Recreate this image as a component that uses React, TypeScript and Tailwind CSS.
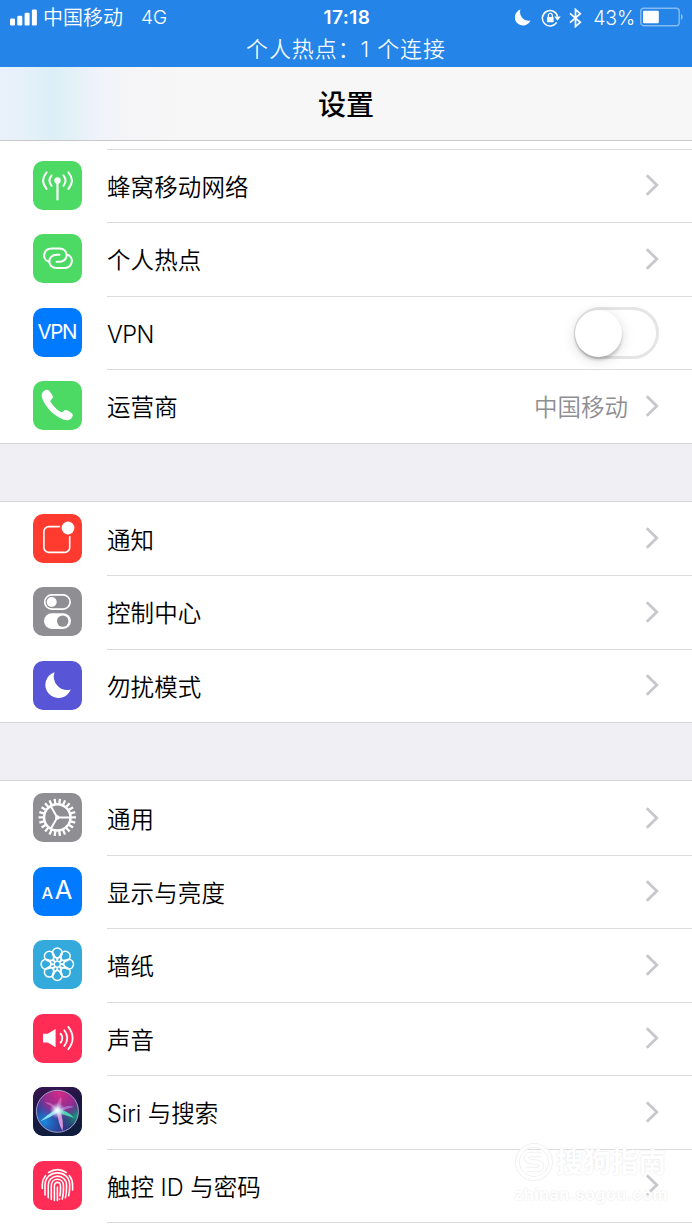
import type { ReactNode } from "react";

type Item = {
  id: string;
  label: string;
  color: string;
  icon: ReactNode;
  tracking?: string;
  value?: string;
  toggle?: boolean;
};

const around = (n: number) => Array.from({ length: n }, (_, i) => (360 / n) * i);

const CellularIcon = () => (
  <g fill="none" stroke="white" strokeWidth="2" strokeLinecap="round">
    <circle cx="24.5" cy="19.5" r="3.2" fill="white" stroke="none" />
    <path d="M24.5 20V38.5" strokeWidth="2.2" />
    <path d="M18.6 14.4Q14.4 19.5 18.6 24.8M30.4 14.4Q34.6 19.5 30.4 24.8" />
    <path d="M13.6 11.4Q6.6 19.5 13.6 28M35.4 11.4Q42.4 19.5 35.4 28" />
  </g>
);

const HotspotIcon = () => (
  <g fill="none" stroke="white" strokeWidth="2" strokeLinecap="round">
    <path d="M15.6 27.6C8.6 25.4 10 14.6 19 14.6H26.5C36 14.6 36 27.8 26.5 27.8H23.5" />
    <path d="M34.4 20.8C41.4 23 40 34 31 34H23.5C14 34 14 20.8 23.5 20.8H26.5" />
  </g>
);

const PhoneIcon = () => (
  <path
    fill="white"
    d="M10.2 10.4C12.4 8.4 14.8 8 16.3 9.8L19.4 14.3C20.6 16.2 19.6 17.5 18 18.8C17.2 19.6 17.3 20.6 18.1 21.7C20.6 25.3 23.7 28.3 27.3 30.8C28.4 31.5 29.3 31.3 30.2 30.5C31.7 29 33 28.6 34.7 29.6L38.9 32.3C40.3 33.4 40 35.2 38.6 36.9C36.6 39.2 34 39.7 31 38.7C21.4 35.4 13 27 9.4 17.8C8.4 14.9 8.3 12.3 10.2 10.4Z"
  />
);

const NotificationIcon = () => (
  <g>
    <rect x="10.9" y="12.6" width="25.8" height="25.8" rx="5" fill="none" stroke="white" strokeWidth="1.6" />
    <circle cx="35" cy="14" r="8.4" fill="#ff3b30" />
    <circle cx="35" cy="14" r="6.4" fill="white" />
  </g>
);

const ControlIcon = () => (
  <g>
    <rect x="11.7" y="7.9" width="25.4" height="14.2" rx="7.1" fill="none" stroke="white" strokeWidth="1.7" />
    <circle cx="18.7" cy="15" r="5" fill="white" />
    <rect x="11" y="26.3" width="27" height="15.6" rx="7.8" fill="white" />
    <circle cx="29.7" cy="34.1" r="5.7" fill="#8e8e93" />
  </g>
);

const MoonIcon = () => (
  <path fill="white" d="M21.5 11.2A13.2 13.2 0 1 0 37.8 28.6A13.6 13.6 0 0 1 21.5 11.2Z" />
);

const GearIcon = () => (
  <g transform="translate(24.3 24.4)" fill="none" stroke="white" strokeWidth="2.3">
    <circle r="13.2" strokeWidth="2.5" />
    {around(22).map((a) => (
      <path key={a} d="M14 0H18.7" transform={`rotate(${a})`} />
    ))}
    {around(3).map((a) => (
      <path key={a} d="M0 0H13" strokeWidth="2" transform={`rotate(${a})`} />
    ))}
    <circle r="2.2" fill="white" stroke="none" />
  </g>
);

const WallpaperIcon = () => (
  <g transform="translate(24.3 24.2)" fill="none" stroke="white" strokeWidth="1.5">
    {around(8).map((a) => (
      <circle key={a} cx="11.3" r="4.9" transform={`rotate(${a})`} />
    ))}
    {around(8).map((a) => (
      <path key={a} d="M3 0Q7.5 -0.5 9.3 -4.4M3 0Q7.5 0.5 9.3 4.4" strokeWidth="1.2" transform={`rotate(${a})`} />
    ))}
    <circle r="3" strokeWidth="1.3" />
  </g>
);

const SoundIcon = () => (
  <g fill="none" stroke="white" strokeWidth="1.8" strokeLinecap="round">
    <path d="M10 19.8H14.8L22.6 14.9V33.3L14.8 28.4H10Z" fill="white" stroke="none" />
    <path d="M27.6 19.6Q31 24.1 27.6 28.6" />
    <path d="M31.3 16.2Q37.3 24.1 31.3 32" />
    <path d="M35.3 12.9Q44 24.1 35.3 35.3" />
  </g>
);

const SiriIcon = () => (
  <g>
    <defs>
      <linearGradient id="siri-bg" x1="0" y1="0" x2="0.3" y2="1">
        <stop offset="0" stopColor="#3a1450" />
        <stop offset="0.5" stopColor="#1b1843" />
        <stop offset="1" stopColor="#101d3c" />
      </linearGradient>
      <radialGradient id="siri-pink" cx="0.55" cy="0.08" r="0.65">
        <stop offset="0" stopColor="#d42a86" />
        <stop offset="0.6" stopColor="#a02d94" stopOpacity="0.85" />
        <stop offset="1" stopColor="#7a3da8" stopOpacity="0" />
      </radialGradient>
      <radialGradient id="siri-blue" cx="0.2" cy="0.75" r="0.65">
        <stop offset="0" stopColor="#178be0" />
        <stop offset="1" stopColor="#2f49b4" stopOpacity="0" />
      </radialGradient>
      <radialGradient id="siri-green" cx="0.95" cy="0.62" r="0.4">
        <stop offset="0" stopColor="#169a7c" />
        <stop offset="1" stopColor="#1c5e70" stopOpacity="0" />
      </radialGradient>
      <radialGradient id="siri-glow">
        <stop offset="0" stopColor="white" />
        <stop offset="0.3" stopColor="#e8f6ff" stopOpacity="0.85" />
        <stop offset="1" stopColor="#b5c8ff" stopOpacity="0" />
      </radialGradient>
    </defs>
    <rect width="49" height="49" rx="10" fill="url(#siri-bg)" />
    <circle cx="24.4" cy="24.3" r="21" fill="#332a78" />
    <circle cx="24.4" cy="24.3" r="21" fill="url(#siri-blue)" />
    <circle cx="24.4" cy="24.3" r="21" fill="url(#siri-green)" />
    <circle cx="24.4" cy="24.3" r="21" fill="url(#siri-pink)" />
    <path d="M24 22Q18 14 12 15.5Q18 18 24 24ZM23 24Q24 14 28 10Q30 16 25 24Z" fill="#ee8fd0" opacity="0.5" />
    <path d="M26 23Q34 17 41 20Q35 21 26 25Z" fill="#b894e8" opacity="0.6" />
    <path d="M24 21.5Q15 27 7 34.5Q17 31 26 24.5Z" fill="#8deaf5" opacity="0.95" />
    <path d="M24 24Q25 36 29.5 44Q31 34 27 23Z" fill="#f2a4e2" opacity="0.85" />
    <path d="M24 22Q34 23 41.5 31Q32 28.5 25 25.5Z" fill="#4fe0b4" opacity="0.9" />
    <circle cx="24.5" cy="23.5" r="8" fill="url(#siri-glow)" />
    <circle cx="24.4" cy="24.3" r="21" fill="none" stroke="#b9b3d8" strokeWidth="1" opacity="0.85" />
  </g>
);

const FingerprintIcon = () => (
  <g fill="none" stroke="white" strokeWidth="1.6" strokeLinecap="round">
    <path d="M15.5 11.5Q24.5 5.8 33.2 11.5" />
    <path d="M9.3 27.5V23Q9.7 18 12.6 14.6M36.3 14.6Q39.8 18.5 39.6 25.5V29" />
    <path d="M12 34V24C12.3 7.8 36.6 7.8 36.7 24C36.8 29 36.3 32 35.6 34.8" />
    <path d="M15.2 36.8V24.5C15.4 12 33.5 12 33.6 24.5C33.7 30 33.2 33.5 32.4 36.8" />
    <path d="M18.3 38.5V25C18.4 16 30.4 16 30.5 25C30.6 31 30.1 35 29.3 38" />
    <path d="M21.4 39.5V25.3C21.5 20 27.4 20 27.5 25.3C27.6 29 27.5 32 27 34.8M26.5 38V38.3" />
    <path d="M24.4 26V39.6" />
  </g>
);

const groups: Item[][] = [
  [
    { id: "cellular", label: "蜂窝移动网络", color: "bg-[#4cd964]", icon: <CellularIcon /> },
    { id: "hotspot", label: "个人热点", color: "bg-[#4cd964]", icon: <HotspotIcon /> },
    {
      id: "vpn",
      label: "VPN",
      color: "bg-[#007aff]",
      tracking: "tracking-[-0.5px]",
      toggle: true,
      icon: (
        <text x="24.5" y="31" textAnchor="middle" fontSize="20.5" textLength="40" fill="white">
          VPN
        </text>
      ),
    },
    { id: "carrier", label: "运营商", color: "bg-[#4cd964]", value: "中国移动", icon: <PhoneIcon /> },
  ],
  [
    { id: "notify", label: "通知", color: "bg-[#ff3b30]", icon: <NotificationIcon /> },
    { id: "control", label: "控制中心", color: "bg-[#8e8e93]", icon: <ControlIcon /> },
    { id: "dnd", label: "勿扰模式", color: "bg-[#5856d6]", icon: <MoonIcon /> },
  ],
  [
    { id: "general", label: "通用", color: "bg-[#8e8e93]", icon: <GearIcon /> },
    {
      id: "display",
      label: "显示与亮度",
      color: "bg-[#007aff]",
      icon: (
        <g fill="white">
          <text x="8.5" y="31.5" fontSize="16.5" fontWeight="500">A</text>
          <text x="21.8" y="32.4" fontSize="25.5">A</text>
        </g>
      ),
    },
    { id: "wallpaper", label: "墙纸", color: "bg-[#34aadc]", icon: <WallpaperIcon /> },
    { id: "sound", label: "声音", color: "bg-[#ff2d55]", icon: <SoundIcon /> },
    { id: "siri", label: "Siri 与搜索", color: "bg-[#1b1843]", tracking: "tracking-[-0.05px]", icon: <SiriIcon /> },
    { id: "touchid", label: "触控 ID 与密码", color: "bg-[#ff2d55]", tracking: "tracking-normal", icon: <FingerprintIcon /> },
  ],
];

function StatusBar() {
  return (
    <header className="h-[67px] bg-[#2484e8] text-white">
      <div className="grid h-[35px] grid-cols-[1fr_auto_1fr] items-center pr-2 pl-2.5">
        <div className="flex items-center text-[20px] [font-weight:350]">
          <svg width="27" height="17" viewBox="0 0 27 17" fill="white">
            <rect x="0" y="9.5" width="5" height="7" rx="1.3" />
            <rect x="7.3" y="6.8" width="5" height="9.7" rx="1.3" />
            <rect x="14.6" y="3.8" width="5" height="12.7" rx="1.3" />
            <rect x="21.9" y="0.5" width="5" height="16" rx="1.3" />
          </svg>
          <span className="ml-1.5 pt-px">中国移动</span>
          <span className="ml-[18px] pt-0.5 text-[19px]">4G</span>
        </div>
        <span className="pt-0.5 text-[19px] font-semibold tracking-[0.5px]">17:18</span>
        <div className="flex items-center justify-end">
          <svg width="16" height="17" viewBox="0 0 16 17" fill="white">
            <path d="M5.5 0.5A8.2 8.2 0 1 0 15.5 11.6A8.6 8.6 0 0 1 5.5 0.5Z" />
          </svg>
          <svg className="ml-2.5" width="20" height="18" viewBox="0 0 20 18" fill="none" stroke="white" strokeWidth="1.5">
            <path d="M15.6 13.4A7.7 7.7 0 1 1 16.6 7.5" />
            <path d="M13.3 7.6H19.7L16.5 11.8Z" fill="white" stroke="none" />
            <rect x="6" y="8" width="6.6" height="5.2" rx="0.6" fill="white" stroke="none" />
            <path d="M7.3 8V6.4A2 2 0 0 1 11.3 6.4V8" strokeWidth="1.2" />
          </svg>
          <svg className="ml-2" width="13" height="20" viewBox="0 0 13 20" fill="none" stroke="white" strokeWidth="1.7">
            <path d="M1 5.3L11.3 14.3L6.5 18.5V1.5L11.3 5.7L1 14.7" />
          </svg>
          <span className="ml-[11px] pt-0.5 text-[19.5px] tracking-[-0.2px] [font-weight:350]">43%</span>
          <svg className="-mt-px ml-[5px]" width="44" height="20" viewBox="0 0 44 20">
            <rect x="0.8" y="1.3" width="38.4" height="17.4" rx="3" fill="none" stroke="white" strokeOpacity="0.45" strokeWidth="1.4" />
            <rect x="3" y="3.8" width="15.8" height="12.5" rx="1" fill="white" />
            <path d="M41 6.8Q44.5 10 41 13.2Z" fill="white" fillOpacity="0.5" />
          </svg>
        </div>
      </div>
      <p className="text-center text-[22px] leading-[28px] tracking-[0.9px] text-white/95 [font-weight:350]">个人热点：1 个连接</p>
    </header>
  );
}

function Switch() {
  return (
    <button
      role="switch"
      aria-checked="false"
      className="h-[52px] w-[85px] rounded-full border-[3px] border-[#e5e5e5] bg-white"
    >
      <span className="-ml-0.5 block size-[47px] rounded-full bg-white shadow-[0_3px_3px_rgba(0,0,0,0.18),0_3px_14px_rgba(0,0,0,0.14)]" />
    </button>
  );
}

function Row({ item, first, flush }: { item: Item; first: boolean; flush: boolean }) {
  return (
    <li className="flex h-[73.5px] pl-[33px]">
      <svg className={`mt-[12.4px] size-[49px] shrink-0 rounded-[10px] ${item.color}`} viewBox="0 0 49 49">
        {item.icon}
      </svg>
      <div
        className={`ml-[25px] flex flex-1 items-center border-t pr-[33px] ${
          first && !flush ? "border-transparent" : "border-[#dcdcdf]"
        }`}
      >
        <span className={`flex-1 pt-[3px] text-[23.5px] text-black [font-weight:350] ${item.tracking ?? "tracking-[0.1px]"}`}>
          {item.label}
        </span>
        {item.value && <span className="pt-[3px] text-[23.5px] text-[#8e8e93] [font-weight:350]">{item.value}</span>}
        {item.toggle ? (
          <Switch />
        ) : (
          <svg className="-mt-px ml-[17px]" width="14" height="24" viewBox="0 0 14 24" fill="none" stroke="#c7c7cc" strokeWidth="2.8">
            <path d="M1.8 2.2L11.8 12L1.8 21.8" />
          </svg>
        )}
      </div>
    </li>
  );
}

function Watermark() {
  return (
    <div className="pointer-events-none absolute top-[1142px] left-[514px] w-[156px] text-white">
      <div className="flex items-center gap-0.5">
        <svg width="40" height="40" viewBox="0 0 40 40" fill="none">
          <circle cx="20" cy="20" r="16.5" stroke="#f1f1f1" strokeWidth="5" />
          <circle cx="20" cy="20" r="16.5" stroke="white" strokeWidth="3" />
          <path d="M28 12.5H17Q12 13 12.5 16.5Q13 19.5 20 20Q28 20.5 27.5 24Q27 27.5 22 27.5H12" stroke="#f1f1f1" strokeWidth="5.5" />
          <path d="M28 12.5H17Q12 13 12.5 16.5Q13 19.5 20 20Q28 20.5 27.5 24Q27 27.5 22 27.5H12" stroke="white" strokeWidth="3.5" />
        </svg>
        <span className="text-[27.5px] leading-10 font-bold whitespace-nowrap [text-shadow:0_0_2px_#dedede]">搜狗指南</span>
      </div>
      <p className="text-[16px] leading-6 font-bold tracking-[0.5px] whitespace-nowrap [text-shadow:0_0_2px_#dedede]">
        zhinan.sogou.com
      </p>
    </div>
  );
}

export default function App() {
  return (
    <div className="relative h-[1230px] overflow-hidden bg-white font-[Inter,'Noto_Sans_CJK_SC',sans-serif]">
      <StatusBar />
      <div className="flex h-[74px] items-center justify-center border-b border-[#cacacd] bg-[linear-gradient(90deg,#e9f1fb_0,#e7f1fa_20px,#dceff6_52px,#e4f1f7_75px,#f0f3fa_100px,#f5f5f7_125px,#f7f7f7_200px)]">
        <h1 className="pt-0.5 text-[28px] font-medium text-black">设置</h1>
      </div>

      <main className="pt-[7.6px]">
        {groups.map((items, i) => (
          <section key={items[0].id}>
            {i > 0 && <div className="h-[59px] border-y border-[#d3d3d8] bg-[#efeff4]" />}
            <ul>
              {items.map((item, j) => (
                <Row key={item.id} item={item} first={j === 0} flush={i === 0} />
              ))}
            </ul>
          </section>
        ))}
        <div className="ml-[107px] border-t border-[#dcdcdf]" />
      </main>

      <Watermark />
    </div>
  );
}
